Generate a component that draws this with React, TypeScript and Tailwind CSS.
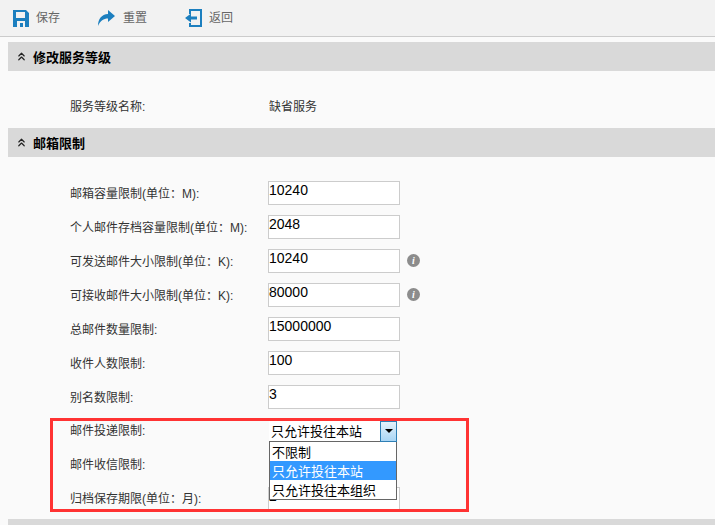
import { ChevronsUp } from 'lucide-react';

const font = { fontFamily: '"Liberation Sans", "Noto Sans CJK SC", sans-serif' };

function SaveIcon() {
  return (
    <svg width="16" height="18" viewBox="0 0 16 18" className="text-[#1c7fbf]">
      <path fill="currentColor" fillRule="evenodd" d="M0 1h13l3 3v14H0zM3 3v6h9V3zM4 12v6h8v-6zM7 14h3v4H7z" />
    </svg>
  );
}

function ResetIcon() {
  return (
    <svg width="17" height="16" viewBox="0 0 17 16" className="text-[#1c7fbf]">
      <path fill="currentColor" d="M10 0l7 6-7 6V8.500C5.500 8.500 2.500 10.500 0 16c0-7 3.500-11.500 10-12z" />
    </svg>
  );
}

function BackIcon() {
  return (
    <svg width="17" height="18" viewBox="0 0 17 18" className="text-[#1c7fbf]">
      <path fill="currentColor" d="M4 0h13v18H4v-4h2v2h9V2H6v3H4z" />
      <path fill="currentColor" d="M0 9l6-4.500V7.500h6v3H6v3z" />
    </svg>
  );
}

function ToolButton({ icon, label, className }: { icon: React.ReactNode; label: string; className: string }) {
  return (
    <div className={`flex items-center ${className}`}>
      {icon}
      <span className="text-[12px] text-[#666666]">{label}</span>
    </div>
  );
}

function SectionHeader({ title }: { title: string }) {
  return (
    <div className="ml-2 flex h-[29px] items-center bg-[#d9d9d9] pl-[7px]">
      <ChevronsUp className="h-[13px] w-[13px] text-[#222222]" strokeWidth={2.2} />
      <span className="mt-[2px] ml-[5px] text-[13px] font-bold text-black">{title}</span>
    </div>
  );
}

const rows = [
  { label: '邮箱容量限制(单位：M):', value: '10240' },
  { label: '个人邮件存档容量限制(单位：M):', value: '2048' },
  { label: '可发送邮件大小限制(单位：K):', value: '10240', info: true },
  { label: '可接收邮件大小限制(单位：K):', value: '80000', info: true },
  { label: '总邮件数量限制:', value: '15000000' },
  { label: '收件人数限制:', value: '100' },
  { label: '别名数限制:', value: '3' },
];

function FieldRow({ label, value, info }: { label: string; value: string; info?: boolean }) {
  return (
    <div className="flex h-[34px] items-start">
      <div className="w-[268px] pt-[4px] pl-[70px] text-[12px] whitespace-nowrap text-[#333333]">{label}</div>
      <div className="h-[24px] w-[132px] border border-[#cccccc] bg-white text-[14px] leading-[17px] text-black">
        {value}
      </div>
      {info && (
        <div className="mt-[5px] ml-[7px] flex h-[13px] w-[13px] items-center justify-center rounded-full bg-[#8c8c8c]">
          <span className="text-[10px] leading-none font-bold text-white italic" style={{ fontFamily: '"Liberation Serif", serif' }}>
            i
          </span>
        </div>
      )}
    </div>
  );
}

export default function App() {
  return (
    <div className="relative h-[525px] w-[715px] overflow-hidden bg-[#fafafa]" style={font}>
      <div className="flex h-[37px] items-center border-b border-[#cccccc] bg-[#f2f2f2] pl-[13px]">
        <ToolButton icon={<SaveIcon />} label="保存" className="w-[85px] gap-[7px]" />
        <ToolButton icon={<ResetIcon />} label="重置" className="w-[87px] gap-[8px]" />
        <ToolButton icon={<BackIcon />} label="返回" className="gap-[7px]" />
      </div>

      <div className="pt-[5px]">
        <SectionHeader title="修改服务等级" />
        <div className="flex h-[57px] items-center pt-[15px] text-[12px] text-[#333333]">
          <div className="w-[268px] pl-[70px]">服务等级名称:</div>
          <div className="ml-[1px]">缺省服务</div>
        </div>
        <SectionHeader title="邮箱限制" />
        <div className="pt-[24px]">
          {rows.map((row) => (
            <FieldRow key={row.label} {...row} />
          ))}
          <div className="flex h-[34px] items-start">
            <div className="w-[268px] pt-[3px] pl-[70px] text-[12px] text-[#333333]">邮件投递限制:</div>
          </div>
          <div className="flex h-[34px] items-start">
            <div className="w-[268px] pt-[3px] pl-[70px] text-[12px] text-[#333333]">邮件收信限制:</div>
          </div>
          <div className="flex h-[32px] items-start">
            <div className="w-[268px] pt-[3px] pl-[70px] text-[12px] whitespace-nowrap text-[#333333]">归档保存期限(单位：月):</div>
            <div className="h-[24px] w-[132px] border border-[#cccccc] bg-white text-[14px] leading-[17px] text-black">2</div>
          </div>
          <div className="ml-2 h-[29px] bg-[#d9d9d9]" />
        </div>
      </div>

      {/* open select menu over the form */}
      <div className="absolute top-[421px] left-[269px] w-[128px] text-[13px] leading-[21px] text-black">
        <div className="flex h-[20px] items-center justify-between bg-white pl-[2px]">
          <span>只允许投往本站</span>
          <div className="flex h-[21px] w-[17px] items-center justify-center border border-[#2f7fb5] bg-gradient-to-b from-[#e4f2fb] to-[#a9d6f5]">
            <div className="h-0 w-0 border-x-[4px] border-t-[4px] border-x-transparent border-t-black" />
          </div>
        </div>
        <div className="border border-[#666666] bg-white">
          <div className="h-[19px] pl-[2px]">不限制</div>
          <div className="h-[19px] bg-[#3399ff] pl-[2px] text-white">只允许投往本站</div>
          <div className="h-[19px] pl-[2px]">只允许投往本组织</div>
        </div>
      </div>

      {/* red annotation box */}
      <div className="absolute top-[418px] left-[50px] h-[94px] w-[419px] border-[3px] border-[#ff3333]" />
    </div>
  );
}
